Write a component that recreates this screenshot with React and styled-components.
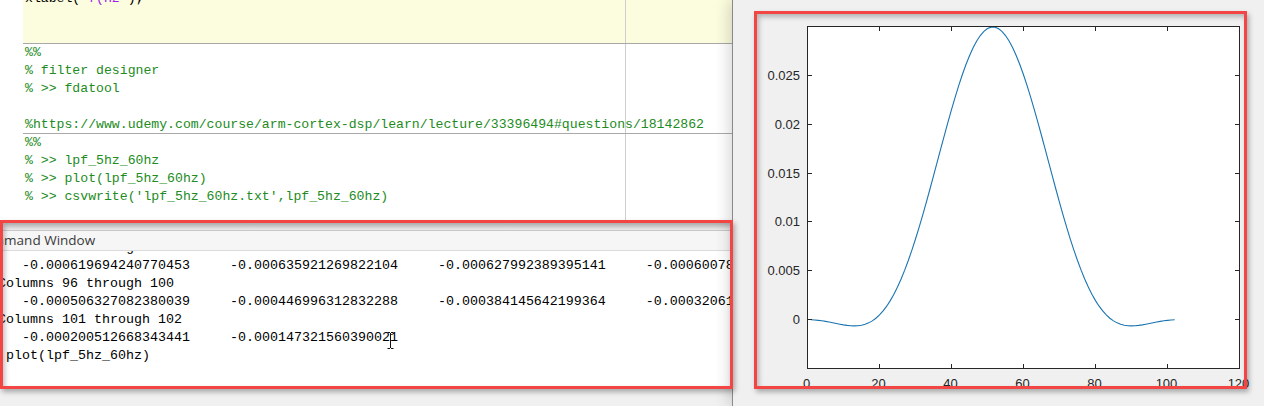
import React from "react";
import styled, { createGlobalStyle } from "styled-components";

const GlobalStyle = createGlobalStyle`
  html, body {
    margin: 0;
    padding: 0;
    background: #f0f0f0;
    overflow: hidden;
  }
  #root {
    width: 1264px;
    height: 406px;
  }
`;

const Screen = styled.div`
  position: relative;
  display: flex;
  width: 1264px;
  height: 406px;
  overflow: hidden;
`;

const LeftColumn = styled.div`
  width: 732px;
  flex: none;
  display: flex;
  flex-direction: column;
  background: #fff;
`;

const Editor = styled.div`
  height: 220px;
  flex: none;
  display: flex;
  background: #fff;
  overflow: hidden;
`;

const Gutter = styled.div`
  width: 23px;
  flex: none;
  background: #fff;
`;

const CodeArea = styled.div`
  flex: 1;
  display: flex;
  flex-direction: column;
`;

const Cell = styled.div`
  height: ${(p) => (p.$h ? `${p.$h}px` : "auto")};
  flex: ${(p) => (p.$h ? "none" : "1")};
  border-bottom: ${(p) => (p.$last ? "none" : "1px solid #a9a9a9")};
  background: linear-gradient(
      to right,
      transparent 602px,
      #cecece 602px,
      #cecece 603px,
      transparent 603px
    ),
    ${(p) => (p.$active ? "#fcfcdf" : "#fff")};
  padding-left: 2px;
  font-family: "Liberation Mono", "Courier New", monospace;
  font-size: 13.17px;
  line-height: 18px;
  white-space: pre;
`;

const Lines = styled.div`
  margin-top: ${(p) => p.$shift || 0}px;
`;

const CodeLine = styled.div`
  height: 18px;
  color: ${(p) => (p.$comment ? "#228b22" : "#000")};
`;

const Str = styled.span`
  color: #a020f0;
`;

const CommandWindow = styled.div`
  flex: 1;
  display: flex;
  flex-direction: column;
  background: #fff;
  overflow: hidden;
`;

const TopStrip = styled.div`
  height: 10px;
  flex: none;
  background: linear-gradient(#d9d9d9, #ececec);
`;

const TitleBar = styled.div`
  height: 19px;
  flex: none;
  background: #f6f6f6;
  border-top: 1px solid #c9c9c9;
  border-bottom: 1px solid #dadada;
  font-family: "Open Sans", "Noto Sans", sans-serif;
  font-size: 13.5px;
  line-height: 19px;
  color: #3a3a3a;
  white-space: nowrap;
  span {
    margin-left: -25px;
  }
`;

const Console = styled.div`
  position: relative;
  height: 138px;
  flex: none;
  background: #fff;
  overflow: hidden;
`;

const ConsoleText = styled.div`
  margin-top: -12px;
  margin-left: -18px;
  font-family: "Liberation Mono", "Courier New", monospace;
  font-size: 13.33px;
  line-height: 18px;
  color: #000;
  white-space: pre;
`;

const Caret = styled.svg`
  position: absolute;
  left: 387px;
  top: 81px;
`;

const Footer = styled.div`
  flex: 1;
  background: #f0f0f0;
`;

const FigurePane = styled.div`
  position: relative;
  z-index: 1;
  flex: 1;
  background: #f0f0f0;
  border-left: 1px solid #8a8a8a;
  box-shadow: -3px 0 14px rgba(0, 0, 0, 0.16);
  svg {
    display: block;
  }
`;

const Annotation = styled.div`
  position: absolute;
  z-index: 2;
  left: ${(p) => p.$x}px;
  top: ${(p) => p.$y}px;
  width: ${(p) => p.$w}px;
  height: ${(p) => p.$h}px;
  box-sizing: border-box;
  border: 3px solid #f44545;
  box-shadow: 2px 3px 5px rgba(0, 0, 0, 0.3),
    inset 2px 3px 5px rgba(0, 0, 0, 0.25);
  pointer-events: none;
`;

const consoleLines = [
  "  Columns 91 through 95",
  "     -0.000619694240770453     -0.000635921269822104     -0.000627992389395141     -0.000600782105417634",
  "  Columns 96 through 100",
  "     -0.000506327082380039     -0.000446996312832288     -0.000384145642199364     -0.000320617590284113",
  "  Columns 101 through 102",
  "     -0.000200512668343441     -0.000147321560390021",
  ">> plot(lpf_5hz_60hz)",
];

// axes geometry in figure-local pixels
const AX = { left: 74.5, right: 506.5, top: 26.5, bottom: 368.5 };
const xs = (n) => AX.left + (n / 120) * (AX.right - AX.left);
const ys = (v) =>
  AX.bottom - ((v + 0.005) / 0.035) * (AX.bottom - AX.top);
const snap = (v) => Math.round(v - 0.5) + 0.5;

const coeffs = Array.from({ length: 102 }, (_, i) => {
  const n = i + 1;
  const d = n - 51.5;
  const u = d / 33;
  const sinc = u === 0 ? 1 : Math.sin(Math.PI * u) / (Math.PI * u);
  const w = 0.5 + 0.5 * Math.cos((Math.PI * d) / 52);
  return [n, 0.02995 * sinc * w];
});

function Plot() {
  const xTicks = [0, 20, 40, 60, 80, 100, 120];
  const yTicks = [0, 0.005, 0.01, 0.015, 0.02, 0.025];
  const path = coeffs
    .map(([n, v], i) => `${i ? "L" : "M"}${xs(n).toFixed(2)},${ys(v).toFixed(2)}`)
    .join(" ");
  const label = {
    fontFamily: "'Liberation Sans', Arial, sans-serif",
    fontSize: 13,
    fill: "#262626",
  };
  return (
    <svg width="531" height="406" viewBox="0 0 531 406">
      <rect
        x={AX.left}
        y={AX.top}
        width={AX.right - AX.left}
        height={AX.bottom - AX.top}
        fill="#fff"
      />
      <path d={path} fill="none" stroke="#1a74b0" strokeWidth="1.1" />
      <rect
        x={AX.left}
        y={AX.top}
        width={AX.right - AX.left}
        height={AX.bottom - AX.top}
        fill="none"
        stroke="#262626"
        strokeWidth="1"
      />
      {xTicks.map((t) => {
        const x = snap(xs(t));
        return (
          <g key={t}>
            <line x1={x} x2={x} y1={AX.bottom} y2={AX.bottom - 4.5} stroke="#262626" />
            <line x1={x} x2={x} y1={AX.top} y2={AX.top + 4.5} stroke="#262626" />
            <text x={x - 1} y={388} textAnchor="middle" {...label}>
              {t}
            </text>
          </g>
        );
      })}
      {yTicks.map((t) => {
        const y = snap(ys(t));
        return (
          <g key={t}>
            <line x1={AX.left} x2={AX.left + 4.5} y1={y} y2={y} stroke="#262626" />
            <line x1={AX.right} x2={AX.right - 4.5} y1={y} y2={y} stroke="#262626" />
            <text x={67} y={y + 4.5} textAnchor="end" {...label}>
              {t}
            </text>
          </g>
        );
      })}
    </svg>
  );
}

export default function App() {
  return (
    <>
      <GlobalStyle />
      <Screen>
        <LeftColumn>
          <Editor>
            <Gutter />
            <CodeArea>
              <Cell $h={43} $active>
                <Lines $shift={-10}>
                  <CodeLine>
                    xlabel(<Str>'f(Hz'</Str>);
                  </CodeLine>
                </Lines>
              </Cell>
              <Cell $h={89}>
                <CodeLine $comment>%%</CodeLine>
                <CodeLine $comment>% filter designer</CodeLine>
                <CodeLine $comment>% &gt;&gt; fdatool</CodeLine>
                <CodeLine $comment> </CodeLine>
                <CodeLine $comment>
                  %https://www.udemy.com/course/arm-cortex-dsp/learn/lecture/33396494#questions/18142862
                </CodeLine>
              </Cell>
              <Cell $last>
                <CodeLine $comment>%%</CodeLine>
                <CodeLine $comment>% &gt;&gt; lpf_5hz_60hz</CodeLine>
                <CodeLine $comment>% &gt;&gt; plot(lpf_5hz_60hz)</CodeLine>
                <CodeLine $comment>
                  % &gt;&gt; csvwrite('lpf_5hz_60hz.txt',lpf_5hz_60hz)
                </CodeLine>
              </Cell>
            </CodeArea>
          </Editor>
          <CommandWindow>
            <TopStrip />
            <TitleBar>
              <span>Command Window</span>
            </TitleBar>
            <Console>
              <ConsoleText>
                {consoleLines.map((l, i) => (
                  <div key={i}>{l}</div>
                ))}
              </ConsoleText>
              <Caret width="7" height="17" viewBox="0 0 7 17">
                <path
                  d="M0.5 0.5h2.5M4 0.5h2.5M3.5 1v15M0.5 16.5h2.5M4 16.5h2.5"
                  stroke="#111"
                  strokeWidth="1"
                  fill="none"
                />
              </Caret>
            </Console>
            <Footer />
          </CommandWindow>
        </LeftColumn>
        <FigurePane>
          <Plot />
        </FigurePane>
        <Annotation $x={0} $y={220} $w={733} $h={169} />
        <Annotation $x={754} $y={11} $w={493} $h={378} />
      </Screen>
    </>
  );
}
